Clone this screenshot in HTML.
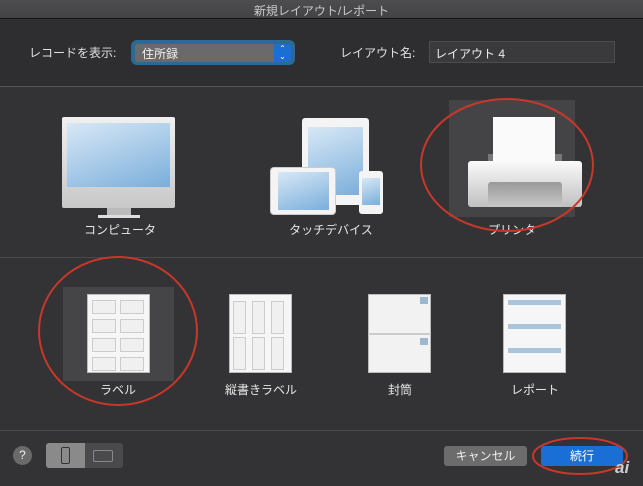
<!DOCTYPE html><html><head><meta charset="utf-8"><style>
*{margin:0;padding:0;box-sizing:border-box}
body{width:643px;height:486px;background:#333335;font-family:"Liberation Sans","Noto Sans CJK JP",sans-serif;color:#ddd;position:relative;overflow:hidden;font-size:12px}
.a{position:absolute}
.t{position:absolute;white-space:nowrap}
.lbl{position:absolute;text-align:center;width:140px;font-size:12px;color:#e6e6e6}
.c{position:absolute;width:24px;height:14px;border:1px solid #ccc;background:#f0f0f0}
.v{position:absolute;width:13px;height:33px;border:1px solid #ccc;background:#f0f0f0}
</style></head><body>
<div class="a" style="left:0;top:0;width:643px;height:19px;background:linear-gradient(#4d4d4f,#434345);border-bottom:1px solid #111"></div>
<div class="t" style="left:0;width:643px;top:2px;text-align:center;font-size:12px;color:#c8c8c8">新規レイアウト/レポート</div>
<div class="a" style="left:0;top:20px;width:643px;height:66px;background:#2e2e30"></div>
<div class="a" style="left:0;top:86px;width:643px;height:1px;background:#555"></div>
<div class="t" style="left:29px;top:44px;font-size:12px;color:#e0e0e0">レコードを表示:</div>
<div class="a" style="left:131px;top:40px;width:164px;height:25px;border-radius:6px;background:#2a6a93"></div>
<div class="a" style="left:135px;top:44px;width:139px;height:18px;background:#6a6a6a;border-radius:3px 0 0 3px"></div>
<div class="a" style="left:274px;top:44px;width:17px;height:18px;background:#1b6fd2;border-radius:0 3px 3px 0;color:#fff;font-size:8px;text-align:center;line-height:8px;padding-top:1px">⌃<br>⌄</div>
<div class="t" style="left:142px;top:45px;color:#f0f0f0">住所録</div>
<div class="t" style="left:340px;top:44px;color:#e0e0e0">レイアウト名:</div>
<div class="a" style="left:429px;top:41px;width:186px;height:22px;background:#3a3a3c;border:1px solid #4c4c4c"></div>
<div class="t" style="left:435px;top:45px;color:#eee">レイアウト 4</div>

<div class="a" style="left:449px;top:100px;width:126px;height:117px;background:#444446"></div>
<div class="a" style="left:62px;top:117px;width:113px;height:91px;background:linear-gradient(#f0f0f0,#c8c8c8);border-radius:2px"></div>
<div class="a" style="left:67px;top:123px;width:103px;height:64px;background:linear-gradient(160deg,#d8e8f6,#7aaedb)"></div>
<div class="a" style="left:107px;top:208px;width:24px;height:8px;background:#bbb"></div>
<div class="a" style="left:98px;top:215px;width:42px;height:3px;background:#ddd"></div>
<div class="a" style="left:302px;top:118px;width:67px;height:87px;background:#f4f4f4;border-radius:3px"></div>
<div class="a" style="left:308px;top:127px;width:55px;height:68px;background:linear-gradient(160deg,#d8e8f6,#7aaedb)"></div>
<div class="a" style="left:271px;top:168px;width:64px;height:46px;background:#f4f4f4;border-radius:3px;box-shadow:0 0 0 1px #ccc"></div>
<div class="a" style="left:278px;top:172px;width:51px;height:38px;background:linear-gradient(160deg,#d8e8f6,#7aaedb)"></div>
<div class="a" style="left:359px;top:171px;width:24px;height:43px;background:#f4f4f4;border-radius:3px"></div>
<div class="a" style="left:362px;top:178px;width:18px;height:27px;background:linear-gradient(160deg,#d8e8f6,#7aaedb)"></div>
<div class="a" style="left:488px;top:154px;width:74px;height:10px;background:#777"></div>
<div class="a" style="left:493px;top:117px;width:62px;height:45px;background:#fafafa"></div>
<div class="a" style="left:468px;top:161px;width:114px;height:46px;background:linear-gradient(#fafafa,#c0c0c0);border-radius:3px"></div>
<div class="a" style="left:488px;top:182px;width:74px;height:25px;background:linear-gradient(#999,#c8c8c8);border-radius:3px 3px 0 0"></div>
<div class="lbl" style="left:50px;top:221px">コンピュータ</div>
<div class="lbl" style="left:261px;top:221px">タッチデバイス</div>
<div class="lbl" style="left:442px;top:221px">プリンタ</div>
<div class="a" style="left:0;top:257px;width:643px;height:1px;background:#4a4a4a"></div>

<div class="a" style="left:63px;top:287px;width:111px;height:94px;background:#454547"></div>
<div class="a" style="left:87px;top:294px;width:63px;height:79px;background:#f6f6f6;border:1px solid #bbb"></div>
<div class="c" style="left:92px;top:300px"></div><div class="c" style="left:120px;top:300px"></div>
<div class="c" style="left:92px;top:319px"></div><div class="c" style="left:120px;top:319px"></div>
<div class="c" style="left:92px;top:338px"></div><div class="c" style="left:120px;top:338px"></div>
<div class="c" style="left:92px;top:357px"></div><div class="c" style="left:120px;top:357px"></div>
<div class="a" style="left:229px;top:294px;width:63px;height:79px;background:#f6f6f6;border:1px solid #bbb"></div>
<div class="v" style="left:233px;top:301px"></div><div class="v" style="left:252px;top:301px"></div><div class="v" style="left:271px;top:301px"></div>
<div class="v" style="left:233px;top:337px"></div><div class="v" style="left:252px;top:337px"></div><div class="v" style="left:271px;top:337px"></div>
<div class="a" style="left:368px;top:294px;width:63px;height:79px;background:#f2f2f2;border:1px solid #bbb"></div>
<div class="a" style="left:368px;top:333px;width:63px;height:2px;background:#ccc"></div>
<div class="a" style="left:420px;top:297px;width:8px;height:7px;background:#9ab8d0"></div>
<div class="a" style="left:420px;top:338px;width:8px;height:7px;background:#9ab8d0"></div>
<div class="a" style="left:503px;top:294px;width:63px;height:79px;background:#f6f6f6;border:1px solid #bbb"></div>
<div class="a" style="left:508px;top:300px;width:53px;height:5px;background:#a9c4db"></div>
<div class="a" style="left:508px;top:324px;width:53px;height:5px;background:#a9c4db"></div>
<div class="a" style="left:508px;top:348px;width:53px;height:5px;background:#a9c4db"></div>
<div class="lbl" style="left:48px;top:381px">ラベル</div>
<div class="lbl" style="left:191px;top:381px">縦書きラベル</div>
<div class="lbl" style="left:330px;top:381px">封筒</div>
<div class="lbl" style="left:465px;top:381px">レポート</div>
<div class="a" style="left:0;top:430px;width:643px;height:1px;background:#4a4a4a"></div>

<div class="a" style="left:13px;top:446px;width:19px;height:19px;border-radius:50%;background:#6a6a6a;color:#eee;text-align:center;line-height:19px;font-size:12px">?</div>
<div class="a" style="left:46px;top:443px;width:77px;height:25px;background:#4a4a4c;border-radius:3px"></div>
<div class="a" style="left:46px;top:443px;width:39px;height:25px;background:#8a8a8a;border-radius:3px 0 0 3px"></div>
<div class="a" style="left:61px;top:447px;width:9px;height:17px;border:1.5px solid #333;border-radius:2px"></div>
<div class="a" style="left:93px;top:450px;width:20px;height:12px;border:1.5px solid #888;border-radius:2px"></div>
<div class="a" style="left:444px;top:446px;width:83px;height:20px;background:#6c6c6c;border-radius:3px;color:#eee;text-align:center;line-height:20px">キャンセル</div>
<div class="a" style="left:541px;top:446px;width:82px;height:20px;background:#1a6fd6;border-radius:3px;color:#fff;text-align:center;line-height:20px">続行</div>

<svg class="a" style="left:0;top:0" width="643" height="486">
<g fill="none" stroke="#c8382a" stroke-width="2">
<ellipse cx="507" cy="165" rx="86" ry="66"/>
<ellipse cx="118" cy="331" rx="79" ry="74"/>
<ellipse cx="580" cy="456" rx="47" ry="18"/>
</g></svg>
<div class="t" style="left:615px;top:458px;font-size:17px;font-style:italic;font-weight:bold;color:#ccc">ai</div>
</body></html>
